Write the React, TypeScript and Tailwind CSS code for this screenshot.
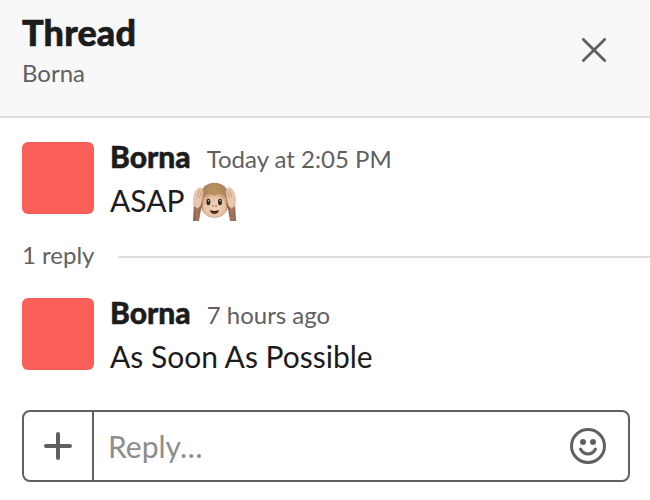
function Monkey() {
  return (
    <svg className="mt-1 h-10 w-[43px] shrink-0" viewBox="0 0 43 40" fill="none" role="img" aria-label="hear-no-evil monkey">
      <defs>
        <radialGradient id="fur" cx="0.5" cy="0.25" r="0.75">
          <stop offset="0" stopColor="#ba9560" />
          <stop offset="0.6" stopColor="#aa8058" />
          <stop offset="1" stopColor="#8a6249" />
        </radialGradient>
        <radialGradient id="face" cx="0.5" cy="0.55" r="0.6">
          <stop offset="0" stopColor="#f3d3b9" />
          <stop offset="0.7" stopColor="#e8c2a3" />
          <stop offset="1" stopColor="#c4977a" />
        </radialGradient>
        <linearGradient id="arm" x1="0" y1="0" x2="1" y2="0">
          <stop offset="0" stopColor="#85594a" />
          <stop offset="0.5" stopColor="#a9795f" />
          <stop offset="1" stopColor="#8d6049" />
        </linearGradient>
      </defs>
      <path d="M21.500.8C12.500.8 7 7 7 17c0 12 5.500 18.500 14.500 18.500S36 29 36 17C36 7 30.500.8 21.500.8Z" fill="url(#fur)" />
      <path d="M21.500 14.200C18 10 9.800 11.500 9.600 18.500c0 2.500.4 4-.3 6C8.600 31 14 35.300 21.500 35.300S34.400 31 33.700 24.500c-.7-2-.3-3.500-.3-6C33.200 11.500 25 10 21.500 14.200Z" fill="url(#face)" />
      <path d="M1 22l7-2 .2 6L6 39H0Z" fill="url(#arm)" />
      <path d="M42 22l-7-2-.2 6L37 39h6Z" fill="url(#arm)" />
      <path d="M1 24C0 17 1 10 4 7.500c1-1.500 2-2 2.600-1.200C8 5.500 9 6.500 8.600 8c1.500 0 1.900 1 1.500 2.500L9 17l-1.500 7-3 2.500Z" fill="#e9c8b0" stroke="#c9a088" strokeWidth=".5" />
      <path d="M42 24c1-7 0-14-3-16.500-1-1.500-2-2-2.600-1.200C35 5.500 34 6.500 34.400 8c-1.500 0-1.900 1-1.500 2.500l1.100 6.500 1.500 7 3 2.500Z" fill="#e9c8b0" stroke="#c9a088" strokeWidth=".5" />
      <path d="M4 15 6.400 8M6.300 16l2.200-7M39 15l-2.400-7M36.700 16l-2.200-7" stroke="#bb8a72" strokeWidth=".7" />
      <ellipse cx="15.400" cy="20" rx="2" ry="3.200" fill="#302b28" />
      <ellipse cx="27" cy="20" rx="2" ry="3.200" fill="#302b28" />
      <circle cx="15.600" cy="18.700" r=".7" fill="#d9d2ce" />
      <circle cx="27.200" cy="18.700" r=".7" fill="#d9d2ce" />
      <path d="M19 24.200q1.200-1 2.100.2m.9 0q1-1.200 2-.2" stroke="#986248" strokeWidth="1" />
      <path d="M16.700 28.300q4.700 1.400 9.400 0-1 3.700-4.700 3.700t-4.700-3.700Z" fill="#602b26" />
      <path d="M18 28.800q3.500.8 7 0l-.7 1.200h-5.600Z" fill="#2f211d" />
    </svg>
  );
}

function Message({ time, text, emoji }: { time: string; text: string; emoji?: boolean }) {
  return (
    <article className="flex h-[88px] gap-4 pl-[22px]">
      <div className="mt-2 size-[72px] shrink-0 rounded-md bg-[#fa5f5a]" />
      <div className="text-[30px] leading-[44px] text-[#1d1c1d]">
        <div className="flex h-11 items-baseline gap-4">
          <span className="font-black [-webkit-text-stroke:0.5px]">Borna</span>
          <span className="text-2xl leading-[44px] text-[#616061]">{time}</span>
        </div>
        <div className="flex gap-2">
          <span>{text}</span>
          {emoji && <Monkey />}
        </div>
      </div>
    </article>
  );
}

export default function App() {
  return (
    <main className="h-[500px] w-[650px] overflow-hidden bg-white font-[Lato,sans-serif]">
      <header className="flex h-[118px] justify-between border-b-2 border-[#dddddd] bg-[#f8f8f8] pt-[14px] pr-11 pl-[22px]">
        <div>
          <h1 className="text-4xl leading-9 font-black tracking-[0.15px] text-[#1d1c1d] [-webkit-text-stroke:0.6px]">Thread</h1>
          <p className="mt-[9px] text-2xl leading-7 text-[#616061]">Borna</p>
        </div>
        <svg className="mt-[24px] size-6" viewBox="0 0 24 24" fill="none" stroke="#616061" strokeWidth="2.800" strokeLinecap="round">
          <path d="M1.400 1.400 22.600 22.600M22.600 1.400 1.400 22.600" />
        </svg>
      </header>
      <section className="pt-4">
        <Message time="Today at 2:05 PM" text="ASAP" emoji />
        <div className="flex h-[68px] items-center gap-6 pl-[22px]">
          <span className="-mt-0.5 text-2xl leading-7 text-[#616061]">1 reply</span>
          <div className="mt-0.5 h-0.5 flex-1 bg-[#dddddd]" />
        </div>
        <Message time="7 hours ago" text="As Soon As Possible" />
      </section>
      <div className="mt-8 mr-5 ml-[22px] flex h-[72px] rounded-lg border-2 border-[#616061]">
        <div className="flex w-[70px] items-center justify-center border-r-2 border-[#616061]">
          <svg className="size-7" viewBox="0 0 28 28" fill="none" stroke="#616061" strokeWidth="4" strokeLinecap="round">
            <path d="M14 2v24M2 14h24" />
          </svg>
        </div>
        <div className="flex flex-1 items-center justify-between pr-[22px] pl-[14px]">
          <span className="text-[30px] leading-9 text-[#8d8d8d]">Reply…</span>
          <svg className="size-9" viewBox="0 0 36 36" fill="none" stroke="#616061" strokeWidth="3">
            <circle cx="18" cy="18" r="16.500" />
            <circle cx="13" cy="14" r="3" fill="#616061" stroke="none" />
            <circle cx="23" cy="14" r="3" fill="#616061" stroke="none" />
            <path d="M10.500 21c3 6.500 12 6.500 15 0" strokeLinecap="round" />
          </svg>
        </div>
      </div>
    </main>
  );
}
